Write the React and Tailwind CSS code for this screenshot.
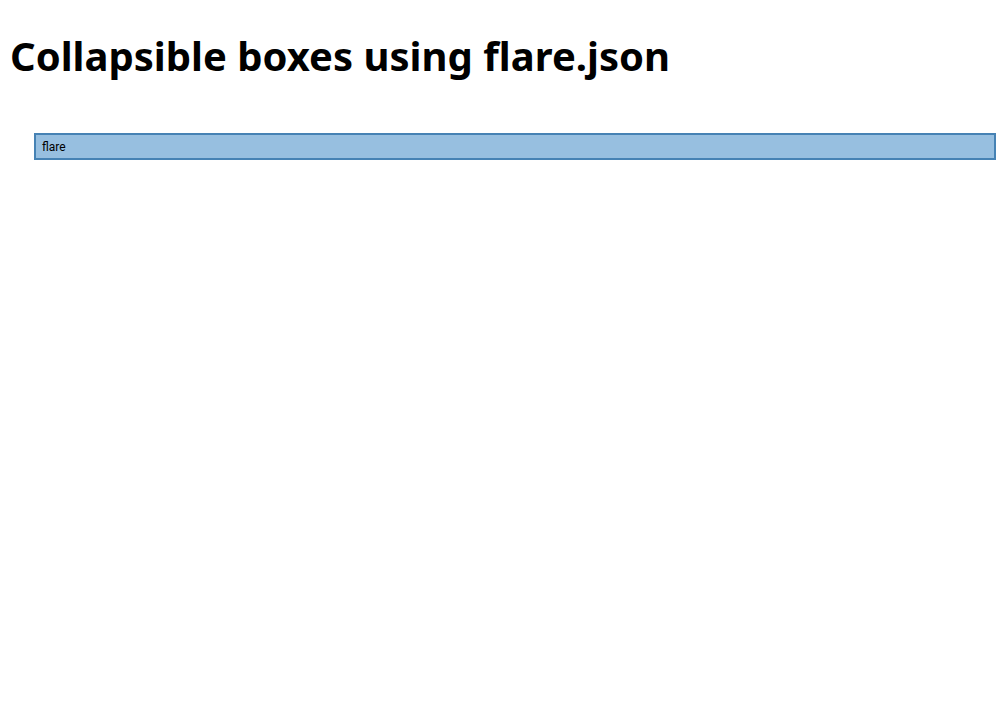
import React from 'react';

// Collapsible boxes page: title plus the root "flare" node
const App = () => {
  return (
    <div className="min-h-screen bg-white">
      <h1
        className="pl-[10px] pt-[30px] text-[40px] font-bold leading-[52px] text-black"
        style={{ fontFamily: '"Noto Sans", sans-serif' }}
      >
        Collapsible boxes using flare.json
      </h1>
      <div className="pl-[34px] pr-[6px] pt-[51px]">
        <div
          className="h-[27px] border-2 border-[#4682b4] bg-[#97bfe0] pl-[6px] pt-[1px] text-[12px] leading-[23px] text-black"
          style={{ fontFamily: 'Roboto, "Liberation Sans", sans-serif' }}
        >
          flare
        </div>
      </div>
    </div>
  );
};

export default App;
